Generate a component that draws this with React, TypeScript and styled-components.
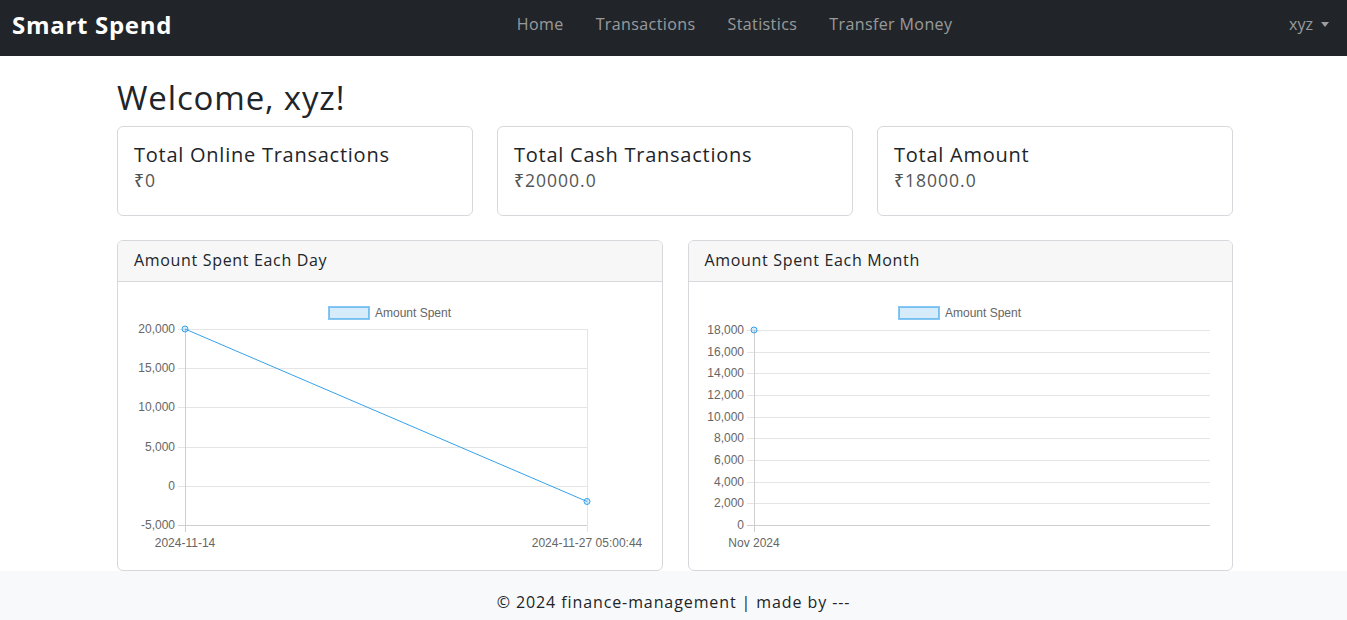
import React from "react";
import styled, { createGlobalStyle } from "styled-components";

const Global = createGlobalStyle`
  * { box-sizing: border-box; }
  html, body { margin: 0; padding: 0; background: #fff; }
  body { font-family: "Open Sans", "Noto Sans", sans-serif; color: #212529; }
`;

const Page = styled.div`
  display: flex;
  flex-direction: column;
  min-height: 620px;
`;

const NavBar = styled.nav`
  height: 56px;
  background: #212529;
  display: flex;
  align-items: center;
  padding: 0 10px 8px 12px;
`;

const Brand = styled.a`
  color: #fff;
  font-weight: 700;
  font-size: 24px;
  letter-spacing: 0.7px;
  margin-right: 16px;
  text-decoration: none;
`;

const NavList = styled.ul`
  list-style: none;
  display: flex;
  margin: 0 auto;
  padding: 0;
`;

const NavLink = styled.a`
  display: block;
  padding: 8px 16px;
  color: rgba(255, 255, 255, 0.55);
  font-size: 16px;
  letter-spacing: 0.4px;
  text-decoration: none;
`;

const UserMenu = styled.a`
  display: flex;
  align-items: center;
  gap: 8px;
  padding: 8px;
  color: rgba(255, 255, 255, 0.55);
  font-size: 16px;
  &::after {
    content: "";
    border-top: 5px solid rgba(255, 255, 255, 0.55);
    border-left: 4px solid transparent;
    border-right: 4px solid transparent;
  }
`;

const Main = styled.main`
  flex: 1;
  padding: 20px 114px 0 117px;
`;

const Heading = styled.h2`
  margin: 0 0 6px;
  font-size: 33px;
  font-weight: 400;
  line-height: 44px;
  letter-spacing: 0.85px;
`;

const StatRow = styled.div`
  display: grid;
  grid-template-columns: repeat(3, 1fr);
  gap: 24px;
`;

const Card = styled.div`
  border: 1px solid #d6d8db;
  border-radius: 6px;
  background: #fff;
  overflow: hidden;
`;

const StatBody = styled.div`
  padding: 16px;
  height: 88px;
`;

const StatTitle = styled.h5`
  margin: 0 0 2px;
  font-size: 20px;
  font-weight: 500;
  line-height: 24px;
  letter-spacing: 0.75px;
`;

const StatValue = styled.div`
  font-size: 17.5px;
  line-height: 22px;
  color: #555;
  font-weight: 500;
  letter-spacing: 1px;
`;

const ChartRow = styled.div`
  display: grid;
  grid-template-columns: 1fr 1fr;
  gap: 25px;
  margin-top: 24px;
`;

const CardHeader = styled.div`
  height: 41px;
  background: #f7f7f7;
  border-bottom: 1px solid #d6d8db;
  padding: 0 16px 2px;
  display: flex;
  align-items: center;
  font-size: 16px;
  letter-spacing: 0.67px;
`;

const ChartBody = styled.div`
  padding: 16px;
  height: 288px;
`;

const Footer = styled.footer`
  background: #f8f9fa;
  height: 49px;
  display: flex;
  align-items: center;
  justify-content: center;
  font-size: 16px;
  letter-spacing: 0.9px;
  color: #212529;
  padding-top: 12px;
`;

type ChartProps = {
  axisX: number;
  right: number;
  top: number;
  bottom: number;
  min: number;
  max: number;
  step: number;
  xs: { x: number; label: string }[];
  points: { x: number; v: number }[];
  legendX: number;
};

const BLUE = "#36a2eb";

function LineChart(p: ChartProps) {
  const yOf = (v: number) => p.bottom - ((v - p.min) / (p.max - p.min)) * (p.bottom - p.top);
  const ticks: number[] = [];
  for (let v = p.min; v <= p.max + 0.1; v += p.step) ticks.push(v);
  const fmt = (v: number) => (v < 0 ? "-" : "") + Math.abs(v).toLocaleString("en-US");
  const pts = p.points.map((pt) => `${pt.x},${yOf(pt.v)}`).join(" ");
  return (
    <svg width="511" height="256" viewBox="0 0 511 256" style={{ display: "block" }}>
      <g fontFamily="'Liberation Sans', Arial, sans-serif" fontSize="12" fill="#666">
        <rect x={p.legendX} y={9} width={40} height={12} fill="rgba(54,162,235,0.2)" stroke="rgba(54,162,235,0.6)" strokeWidth={2} />
        <text x={p.legendX + 46} y={19}>Amount Spent</text>
        {ticks.map((v) => (
          <g key={v}>
            <line x1={p.axisX - 7} x2={p.right} y1={Math.round(yOf(v)) + 0.5} y2={Math.round(yOf(v)) + 0.5} stroke={v === p.min ? "#cfcfcf" : "#e5e5e5"} />
            <text x={p.axisX - 10} y={yOf(v) + 4} textAnchor="end">{fmt(v)}</text>
          </g>
        ))}
        {p.xs.map((x) => (
          <g key={x.label}>
            <line x1={x.x + 0.5} x2={x.x + 0.5} y1={p.top} y2={p.bottom + 7} stroke={x.x === p.axisX ? "#cfcfcf" : "#e5e5e5"} />
            <text x={x.x} y={p.bottom + 22} textAnchor="middle">{x.label}</text>
          </g>
        ))}
        <polyline points={pts} fill="none" stroke={BLUE} strokeWidth={1} />
        {p.points.map((pt) => (
          <circle key={pt.x} cx={pt.x} cy={yOf(pt.v)} r={3} fill="rgba(54,162,235,0.2)" stroke={BLUE} strokeWidth={1} />
        ))}
      </g>
    </svg>
  );
}

export default function App() {
  return (
    <Page>
      <Global />
      <NavBar>
        <Brand>Smart Spend</Brand>
        <NavList>
          <li><NavLink>Home</NavLink></li>
          <li><NavLink>Transactions</NavLink></li>
          <li><NavLink>Statistics</NavLink></li>
          <li><NavLink>Transfer Money</NavLink></li>
        </NavList>
        <UserMenu>xyz</UserMenu>
      </NavBar>
      <Main>
        <Heading>Welcome, xyz!</Heading>
        <StatRow>
          <Card>
            <StatBody>
              <StatTitle>Total Online Transactions</StatTitle>
              <StatValue>₹0</StatValue>
            </StatBody>
          </Card>
          <Card>
            <StatBody>
              <StatTitle>Total Cash Transactions</StatTitle>
              <StatValue>₹20000.0</StatValue>
            </StatBody>
          </Card>
          <Card>
            <StatBody>
              <StatTitle>Total Amount</StatTitle>
              <StatValue>₹18000.0</StatValue>
            </StatBody>
          </Card>
        </StatRow>
        <ChartRow>
          <Card>
            <CardHeader>Amount Spent Each Day</CardHeader>
            <ChartBody>
              <LineChart
                axisX={51}
                right={453}
                top={31}
                bottom={227}
                min={-5000}
                max={20000}
                step={5000}
                xs={[
                  { x: 51, label: "2024-11-14" },
                  { x: 453, label: "2024-11-27 05:00:44" },
                ]}
                points={[
                  { x: 51, v: 20000 },
                  { x: 453, v: -2000 },
                ]}
                legendX={195}
              />
            </ChartBody>
          </Card>
          <Card>
            <CardHeader>Amount Spent Each Month</CardHeader>
            <ChartBody>
              <LineChart
                axisX={49}
                right={505}
                top={32}
                bottom={227}
                min={0}
                max={18000}
                step={2000}
                xs={[{ x: 49, label: "Nov 2024" }]}
                points={[{ x: 49, v: 18000 }]}
                legendX={194}
              />
            </ChartBody>
          </Card>
        </ChartRow>
      </Main>
      <Footer>© 2024 finance-management | made by ---</Footer>
    </Page>
  );
}
